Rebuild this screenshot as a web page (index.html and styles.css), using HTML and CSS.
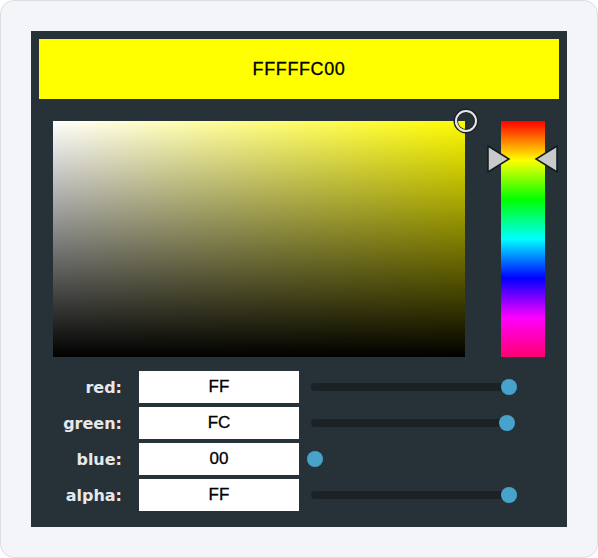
FILE: index.html
```html
<!DOCTYPE html>
<html lang="en">
<head>
    <meta charset="UTF-8">
    <title>Color Picker</title>
    <link rel="stylesheet" href="styles.css">
</head>
<body>
<div class="frame">
    <div class="picker">
        <div class="preview">FFFFFC00</div>
        <div class="area">
            <div class="sv">
                <span class="sv-cursor"></span>
            </div>
            <div class="hue-wrap">
                <div class="hue"></div>
                <svg class="arrows" width="72" height="28" viewBox="0 0 72 28">
                    <polygon points="1,1 22,14 1,27" fill="#c9cacc" stroke="#111a1e" stroke-width="1.5"/>
                    <polygon points="70,1 49,14 70,27" fill="#c9cacc" stroke="#111a1e" stroke-width="1.5"/>
                </svg>
            </div>
        </div>
        <div class="rows">
            <div class="row">
                <label>red:</label>
                <div class="value">FF</div>
                <div class="slider">
                    <div class="track" style="width:198px"></div>
                    <span class="thumb" style="left:194px"></span>
                </div>
            </div>
            <div class="row">
                <label>green:</label>
                <div class="value">FC</div>
                <div class="slider">
                    <div class="track" style="width:196px"></div>
                    <span class="thumb" style="left:192px"></span>
                </div>
            </div>
            <div class="row">
                <label>blue:</label>
                <div class="value">00</div>
                <div class="slider">
                    <span class="thumb" style="left:0px"></span>
                </div>
            </div>
            <div class="row">
                <label>alpha:</label>
                <div class="value">FF</div>
                <div class="slider">
                    <div class="track" style="width:198px"></div>
                    <span class="thumb" style="left:194px"></span>
                </div>
            </div>
        </div>
    </div>
</div>
</body>
</html>
```

FILE: styles.css
```css
html, body{
    margin: 0;
    padding: 0;
    background: #ffffff;
}
.frame{
    width: 598px;
    height: 558px;
    box-sizing: border-box;
    padding: 30px;
    background: #f3f5f8;
    border: 1px solid #dcdde6;
    border-radius: 14px;
}
.picker{
    width: 536px;
    box-sizing: border-box;
    padding: 8px 8px 16px 8px;
    background: #263238;
}
.preview{
    height: 60px;
    background: #ffff00;
    color: #000;
    font-family: "Liberation Sans", Arial, sans-serif;
    font-size: 18px;
    line-height: 60px;
    text-align: center;
    letter-spacing: 0.6px;
    -webkit-text-stroke: 0.3px #000;
}
.area{
    display: flex;
    margin-top: 22px;
    padding: 0 14px;
    gap: 36px;
}
.sv{
    position: relative;
    width: 412px;
    height: 236px;
    background:
        linear-gradient(to top, #000 0%, rgba(0,0,0,0) 100%),
        linear-gradient(to right, #fff 0%, #fffc00 100%);
}
.sv-cursor{
    position: absolute;
    right: -12px;
    top: -11px;
    width: 18px;
    height: 18px;
    border-radius: 50%;
    border: 2px solid #e6e6e6;
    box-shadow: 0 0 0 1.5px #1a2226, inset 0 0 0 1px #1a2226;
}
.hue-wrap{
    position: relative;
    width: 44px;
    height: 236px;
}
.hue{
    width: 44px;
    height: 236px;
    background: linear-gradient(to bottom,
        #ff0000 0%, #ffff00 16.6%, #00ff00 33.3%, #00ffff 50%,
        #0000ff 66.6%, #ff00ff 83.3%, #ff0070 100%);
}
.arrows{
    position: absolute;
    left: -14px;
    top: 24px;
}
.rows{
    display: flex;
    flex-direction: column;
    gap: 4px;
    margin-top: 14px;
    padding-left: 14px;
}
.row{
    display: flex;
    align-items: center;
    height: 32px;
}
.row label{
    width: 69px;
    margin-right: 17px;
    text-align: right;
    color: #e6e8ea;
    font-family: "DejaVu Sans", sans-serif;
    font-weight: bold;
    font-size: 16px;
}
.value{
    width: 160px;
    height: 32px;
    background: #fff;
    color: #000;
    font-family: "Liberation Sans", Arial, sans-serif;
    font-size: 17px;
    line-height: 32px;
    text-align: center;
    -webkit-text-stroke: 0.3px #000;
}
.slider{
    position: relative;
    width: 210px;
    height: 32px;
    margin-left: 8px;
}
.track{
    position: absolute;
    left: 4px;
    top: 12px;
    height: 8px;
    border-radius: 4px;
    background: #1b2225;
}
.thumb{
    position: absolute;
    top: 8px;
    width: 16px;
    height: 16px;
    border-radius: 50%;
    background: #47a3cc;
}
```
